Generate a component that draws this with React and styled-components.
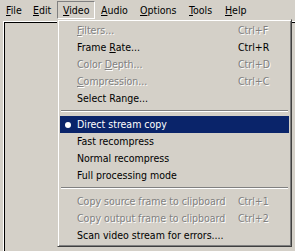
import React from "react";
import styled, { createGlobalStyle } from "styled-components";

const GlobalStyle = createGlobalStyle`
  html, body {
    margin: 0;
    padding: 0;
    background: #d4d0c8;
    overflow: hidden;
  }
  body {
    font-family: "DejaVu Sans Condensed", "Liberation Sans", Arial, sans-serif;
    font-size: 10.5px;
    color: #000;
  }
`;

const menuBar = [
  { label: "File", key: "F", width: 27 },
  { label: "Edit", key: "E", width: 30 },
  { label: "Video", key: "V", width: 38, open: true },
  { label: "Audio", key: "A", width: 39 },
  { label: "Options", key: "O", width: 49 },
  { label: "Tools", key: "T", width: 36 },
  { label: "Help", key: "H", width: 33 },
];

const videoMenu = [
  { label: "Filters...", key: "F", shortcut: "Ctrl+F", disabled: true },
  { label: "Frame Rate...", key: "R", shortcut: "Ctrl+R" },
  { label: "Color Depth...", key: "D", shortcut: "Ctrl+D", disabled: true },
  { label: "Compression...", key: "C", shortcut: "Ctrl+C", disabled: true },
  { label: "Select Range..." },
  { separator: true },
  { label: "Direct stream copy", checked: true, active: true },
  { label: "Fast recompress" },
  { label: "Normal recompress" },
  { label: "Full processing mode" },
  { separator: true },
  { label: "Copy source frame to clipboard", shortcut: "Ctrl+1", disabled: true },
  { label: "Copy output frame to clipboard", shortcut: "Ctrl+2", disabled: true },
  { label: "Scan video stream for errors...." },
];

// underline the mnemonic letter (first match)
function withMnemonic(label, key) {
  if (!key) return label;
  const i = label.indexOf(key);
  if (i < 0) return label;
  return (
    <>
      {label.slice(0, i)}
      <Mnemonic>{label[i]}</Mnemonic>
      {label.slice(i + 1)}
    </>
  );
}

export default function App() {
  return (
    <>
      <GlobalStyle />
      <Window>
        <MenuBar>
          {menuBar.map((m) => (
            <BarItem key={m.label} $width={m.width} $open={m.open}>
              {withMnemonic(m.label, m.key)}
            </BarItem>
          ))}
        </MenuBar>
        <Frame>
          <Pane />
        </Frame>

        <Dropdown>
          {videoMenu.map((item, i) =>
            item.separator ? (
              <Separator key={i} />
            ) : (
              <Item key={i} $active={item.active} $disabled={item.disabled}>
                <Check>{item.checked && <Bullet />}</Check>
                <Label>{withMnemonic(item.label, item.key)}</Label>
                <Shortcut>{item.shortcut}</Shortcut>
              </Item>
            )
          )}
        </Dropdown>
      </Window>
    </>
  );
}

const Window = styled.div`
  position: relative;
  width: 295px;
  height: 251px;
  overflow: hidden;
`;

const MenuBar = styled.div`
  display: flex;
  height: 19px;
  padding-top: 1px;
  box-sizing: border-box;
`;

const BarItem = styled.div`
  width: ${(p) => p.$width}px;
  height: 18px;
  box-sizing: border-box;
  padding-left: 5px;
  line-height: 16px;
  white-space: nowrap;
  border: 1px solid transparent;
  ${(p) =>
    p.$open &&
    `
    border-color: #808080 #ffffff #ffffff #808080;
  `}
`;

const Mnemonic = styled.u`
  text-decoration: underline;
  text-underline-offset: 1px;
`;

const Frame = styled.div`
  margin: 2px 0 0 3px;
  width: 400px;
  height: 300px;
  border-top: 1px solid #ffffff;
  border-left: 1px solid #ffffff;
`;

const Pane = styled.div`
  height: 100%;
  border-top: 1px solid #000000;
  border-left: 1px solid #000000;
`;

const Dropdown = styled.div`
  position: absolute;
  left: 57px;
  top: 19px;
  width: 235px;
  box-sizing: border-box;
  padding: 2px;
  background: #d4d0c8;
  border: 1px solid;
  border-color: #d4d0c8 #404040 #404040 #d4d0c8;
  box-shadow: inset 1px 1px 0 #ffffff, inset -1px -1px 0 #808080;
`;

const Item = styled.div`
  display: grid;
  grid-template-columns: 17px 161px 1fr;
  align-items: center;
  height: 17px;
  line-height: 17px;
  white-space: nowrap;
  color: ${(p) => (p.$active ? "#ffffff" : p.$disabled ? "#808080" : "#000000")};
  background: ${(p) => (p.$active ? "#0a246a" : "transparent")};
  text-shadow: ${(p) => (p.$disabled ? "1px 1px 0 #ffffff" : "none")};
`;

const Check = styled.span`
  display: flex;
  align-items: center;
  justify-content: center;
  height: 17px;
  padding-right: 1px;
`;

const Bullet = styled.span`
  width: 6px;
  height: 6px;
  border-radius: 50%;
  background: currentColor;
`;

const Label = styled.span``;

const Shortcut = styled.span``;

const Separator = styled.div`
  margin: 3px 1px 4px;
  border-top: 1px solid #808080;
  border-bottom: 1px solid #ffffff;
`;
